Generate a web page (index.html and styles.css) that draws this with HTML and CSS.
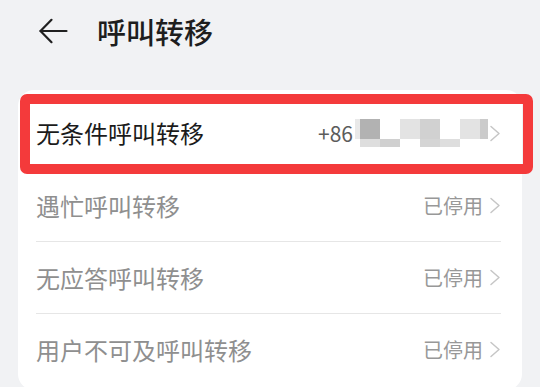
FILE: index.html
```html
<!DOCTYPE html>
<html lang="zh-CN">
<head>
<meta charset="utf-8">
<link rel="stylesheet" href="styles.css">
</head>
<body>
<div class="screen">
  <header class="topbar">
    <svg class="back" width="30" height="26" viewBox="0 0 30 26" fill="none" stroke="#202020" stroke-width="2.2" stroke-linecap="round" stroke-linejoin="round">
      <path d="M2.5 13 H28.5"/>
      <path d="M13.5 1.8 L2.5 13 L13.5 24.2"/>
    </svg>
    <h1 class="title">呼叫转移</h1>
  </header>

  <section class="card">
    <div class="row">
      <span class="label label-main">无条件呼叫转移</span>
      <span class="value">
        <span class="num">+86</span>
        <span class="blur">
          <span class="px ca"></span><span class="px c0"></span><span class="px c1"></span><span class="px c2"></span><span class="px c3"></span><span class="px c1"></span><span class="px c2"></span><span class="px c4"></span>
          <span class="px c1"></span><span class="px c5"></span><span class="px c6"></span><span class="px c1"></span><span class="px c7"></span><span class="px c5"></span><span class="px c1"></span><span class="px c1"></span>
        </span>
        <svg class="chev" width="12" height="17" viewBox="0 0 12 17" fill="none" stroke="#c6c6c6" stroke-width="1.5" stroke-linecap="round" stroke-linejoin="round"><path d="M2 1.5 L10 8.5 L2 15.5"/></svg>
      </span>
    </div>
    <div class="row">
      <span class="label">遇忙呼叫转移</span>
      <span class="value"><span class="status">已停用</span><svg class="chev" width="12" height="17" viewBox="0 0 12 17" fill="none" stroke="#c6c6c6" stroke-width="1.5" stroke-linecap="round" stroke-linejoin="round"><path d="M2 1.5 L10 8.5 L2 15.5"/></svg></span>
    </div>
    <div class="row">
      <span class="label">无应答呼叫转移</span>
      <span class="value"><span class="status">已停用</span><svg class="chev" width="12" height="17" viewBox="0 0 12 17" fill="none" stroke="#c6c6c6" stroke-width="1.5" stroke-linecap="round" stroke-linejoin="round"><path d="M2 1.5 L10 8.5 L2 15.5"/></svg></span>
    </div>
    <div class="row">
      <span class="label">用户不可及呼叫转移</span>
      <span class="value"><span class="status">已停用</span><svg class="chev" width="12" height="17" viewBox="0 0 12 17" fill="none" stroke="#c6c6c6" stroke-width="1.5" stroke-linecap="round" stroke-linejoin="round"><path d="M2 1.5 L10 8.5 L2 15.5"/></svg></span>
    </div>
    <div class="highlight"></div>
  </section>
</div>
</body>
</html>
```

FILE: styles.css
```css
* { box-sizing: border-box; }
html, body {
  margin: 0;
  padding: 0;
  background: #f1f2f4;
}
body {
  font-family: "Noto Sans CJK SC", "Noto Sans", sans-serif;
  width: 540px;
  height: 387px;
  overflow: hidden;
}
.screen {
  display: flex;
  flex-direction: column;
}
.topbar {
  height: 90px;
  display: flex;
  align-items: flex-start;
  padding: 18px 0 0 38px;
}
.back {
  display: block;
}
.title {
  margin: -7px 0 0 29px;
  font-size: 29px;
  font-weight: 500;
  color: #1e1e1e;
  line-height: 40px;
}
.card {
  position: relative;
  margin: 0 18px;
  background: #ffffff;
  border-radius: 16px;
  padding: 7px 21px 0 18px;
  height: 300px;
}
.row {
  height: 72px;
  display: flex;
  align-items: center;
  justify-content: space-between;
  border-top: 1px solid #e6e6e6;
}
.row:first-child { border-top: none; }
.label {
  font-size: 24px;
  color: #8f8f8f;
  line-height: 30px;
}
.label-main { color: #1b1b1b; }
.value {
  display: flex;
  align-items: center;
}
.status {
  font-size: 20px;
  color: #989898;
  margin-right: 6px;
  line-height: 26px;
}
.num {
  font-size: 21px;
  color: #5c5c5c;
  line-height: 26px;
  margin-right: 2px;
}
.blur {
  display: grid;
  grid-template-columns: 5px 20px 20px 20px 20px 20px 20px 8px;
  grid-template-rows: 20px 8px;
  margin-right: 1px;
}
.px { display: block; }
.ca { background: #e9e9e9; }
.c0 { background: #b2b2b2; }
.c1 { background: transparent; }
.c2 { background: #e3e3e3; }
.c3 { background: #d1d1d1; }
.c4 { background: #cbcbcb; }
.c5 { background: #dedede; }
.c6 { background: #d0d0d0; }
.c7 { background: #d5d5d5; }
.chev { display: block; }
.highlight {
  position: absolute;
  left: 2px;
  top: 4px;
  width: 513px;
  height: 80px;
  border: 10px solid #f43a3b;
  border-radius: 7px;
  pointer-events: none;
}
```
